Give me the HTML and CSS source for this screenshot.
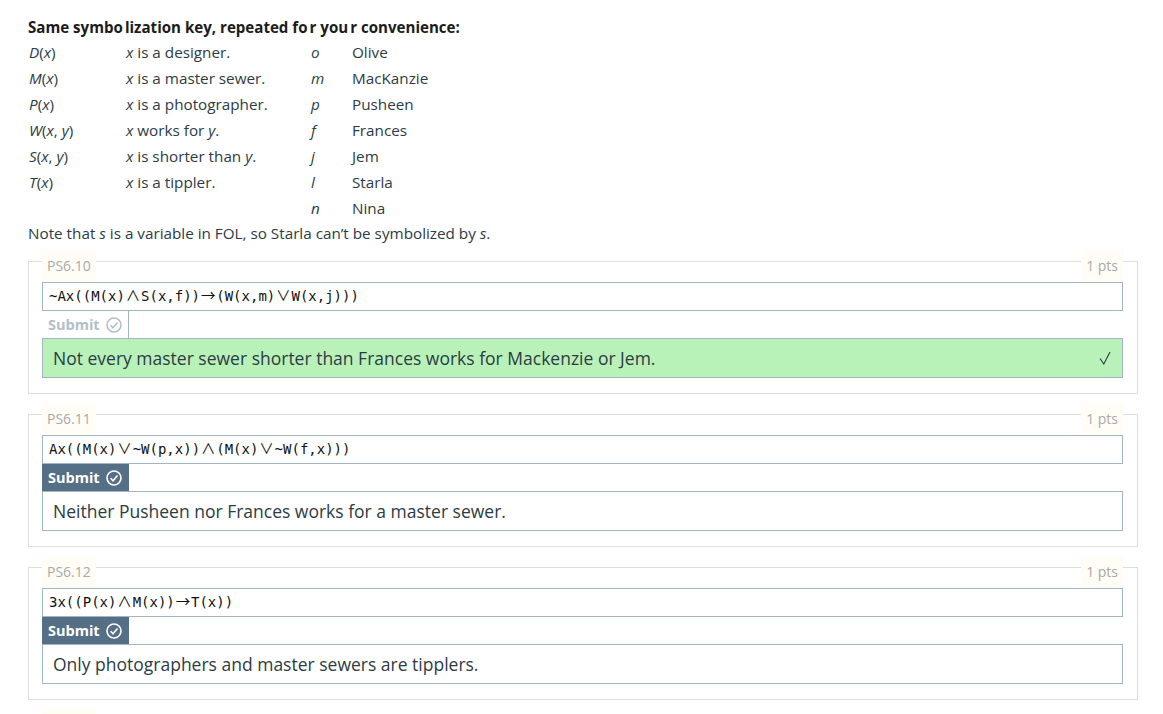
FILE: index.html
```html
<!DOCTYPE html>
<html lang="en">
<head>
  <meta charset="UTF-8" />
  <title>PS6 Symbolization</title>
  <link rel="stylesheet" href="styles.css">
</head>
<body>
  <p class="key-title">Same symbo<span class="gap">l</span>ization key, repeated fo<span class="gap">r</span> you<span class="gap">r</span> convenience:</p>
  <table class="key">
    <tr><td class="c1"><i>D</i>(<i>x</i>)</td><td class="c2"><i>x</i> is a designer.</td><td class="c3"><i>o</i></td><td>Olive</td></tr>
    <tr><td class="c1"><i>M</i>(<i>x</i>)</td><td class="c2"><i>x</i> is a master sewer.</td><td class="c3"><i>m</i></td><td>MacKanzie</td></tr>
    <tr><td class="c1"><i>P</i>(<i>x</i>)</td><td class="c2"><i>x</i> is a photographer.</td><td class="c3"><i>p</i></td><td>Pusheen</td></tr>
    <tr><td class="c1"><i>W</i>(<i>x</i>, <i>y</i>)</td><td class="c2"><i>x</i> works for <i>y</i>.</td><td class="c3"><i>f</i></td><td>Frances</td></tr>
    <tr><td class="c1"><i>S</i>(<i>x</i>, <i>y</i>)</td><td class="c2"><i>x</i> is shorter than <i>y</i>.</td><td class="c3"><i>j</i></td><td>Jem</td></tr>
    <tr><td class="c1"><i>T</i>(<i>x</i>)</td><td class="c2"><i>x</i> is a tippler.</td><td class="c3"><i>l</i></td><td>Starla</td></tr>
    <tr><td class="c1"></td><td class="c2"></td><td class="c3"><i>n</i></td><td>Nina</td></tr>
  </table>
  <p class="note">Note that <i>s</i> is a variable in FOL, so Starla can’t be symbolized by <i>s</i>.</p>

  <div class="problem">
    <div class="problem-head"><span class="tag">PS6.10</span><span class="tag">1 pts</span></div>
    <div class="formula">~Ax((M(x)<span class="sym">∧</span>S(x,f))<span class="sym">→</span>(W(x,m)<span class="sym">∨</span>W(x,j)))</div>
    <button class="submit done">Submit <svg class="ok" viewBox="0 0 16 16"><circle cx="8" cy="8" r="7"/><path d="M4.6 8.2l2.4 2.5 4.5-5.2"/></svg></button>
    <div class="answer correct">Not every master sewer shorter than Frances works for Mackenzie or Jem.<svg class="tick" viewBox="0 0 12 14"><path d="M1 7.5l3.8 5.5L11 1"/></svg></div>
  </div>

  <div class="problem">
    <div class="problem-head"><span class="tag">PS6.11</span><span class="tag">1 pts</span></div>
    <div class="formula">Ax((M(x)<span class="sym">∨</span>~W(p,x))<span class="sym">∧</span>(M(x)<span class="sym">∨</span>~W(f,x)))</div>
    <button class="submit">Submit <svg class="ok" viewBox="0 0 16 16"><circle cx="8" cy="8" r="7"/><path d="M4.6 8.2l2.4 2.5 4.5-5.2"/></svg></button>
    <div class="answer">Neither Pusheen nor Frances works for a master sewer.</div>
  </div>

  <div class="problem">
    <div class="problem-head"><span class="tag">PS6.12</span><span class="tag">1 pts</span></div>
    <div class="formula">3x((P(x)<span class="sym">∧</span>M(x))<span class="sym">→</span>T(x))</div>
    <button class="submit">Submit <svg class="ok" viewBox="0 0 16 16"><circle cx="8" cy="8" r="7"/><path d="M4.6 8.2l2.4 2.5 4.5-5.2"/></svg></button>
    <div class="answer">Only photographers and master sewers are tipplers.</div>
  </div>

  <div class="next-tag"></div>
</body>
</html>
```

FILE: styles.css
```css
html {
  overflow: hidden;
}
body {
  margin: 0;
  padding: 16px 25px 0 28px;
  height: 714px;
  box-sizing: border-box;
  overflow: hidden;
  background-color: #fff;
  color: #2d3b45;
  font-family: "Open Sans", sans-serif;
  font-size: 15.25px;
  line-height: 22px;
}
.key-title {
  margin: 0 0 1px;
  font-size: 15.1px;
  font-weight: 700;
  color: #1c1c1c;
}
.gap {
  margin-left: 2px;
}
.key {
  border-collapse: collapse;
}
.key td {
  padding: 0;
  height: 26px;
}
.c1 {
  width: 97px;
  padding-left: 1px !important;
}
.c2 {
  width: 185px;
}
.c3 {
  width: 41px;
}
.note {
  margin: 0;
  padding-top: 1px;
}
.problem {
  margin: 17px 0 20px;
  height: 133px;
  box-sizing: border-box;
  padding: 0 14px 0 13px;
  border: 1px solid #ddd;
}
.problem-head {
  display: flex;
  justify-content: space-between;
  height: 31px;
  margin-top: -12px;
  margin-bottom: 1px;
}
.tag {
  box-sizing: border-box;
  padding: 0 5px;
  background-color: #fffdf6;
  color: #a9a9a9;
  font-size: 14px;
  line-height: 31px;
}
.formula {
  height: 29px;
  box-sizing: border-box;
  border: 1px solid #a5b4c2;
  padding: 0 6px;
  background-color: #fff;
  color: #111;
  font-family: "DejaVu Sans Mono", monospace;
  font-size: 14px;
  line-height: 27px;
}
.sym {
  display: inline-block;
  width: 16.2px;
  line-height: 0;
  text-align: center;
  font-family: "Noto Sans CJK JP", sans-serif;
  font-size: 14.5px;
}
.submit {
  display: flex;
  align-items: center;
  gap: 6px;
  width: 87px;
  height: 27px;
  padding: 0 6px;
  border: 0;
  border-radius: 0;
  background-color: #557086;
  color: #fff;
  font-family: "Open Sans", sans-serif;
  font-size: 14.5px;
  font-weight: 700;
}
.submit.done {
  background-color: #fff;
  border-right: 1px solid #a5b4c2;
  color: #b2bfca;
}
.ok {
  width: 16px;
  height: 16px;
  fill: none;
  stroke: currentColor;
  stroke-width: 1.6;
}
.answer {
  display: flex;
  justify-content: space-between;
  align-items: center;
  height: 40px;
  box-sizing: border-box;
  border: 1px solid #a5b4c2;
  padding: 0 10px;
  color: #2d3b45;
  font-size: 17.5px;
}
.answer.correct {
  background-color: #b8f2b8;
}
.tick {
  width: 12px;
  height: 14px;
  margin-right: 1px;
  fill: none;
  stroke: #2d3b45;
  stroke-width: 1.1;
}
.next-tag {
  width: 54px;
  height: 8px;
  margin: -12px 0 0 14px;
  background-color: #fffdf6;
}
```
